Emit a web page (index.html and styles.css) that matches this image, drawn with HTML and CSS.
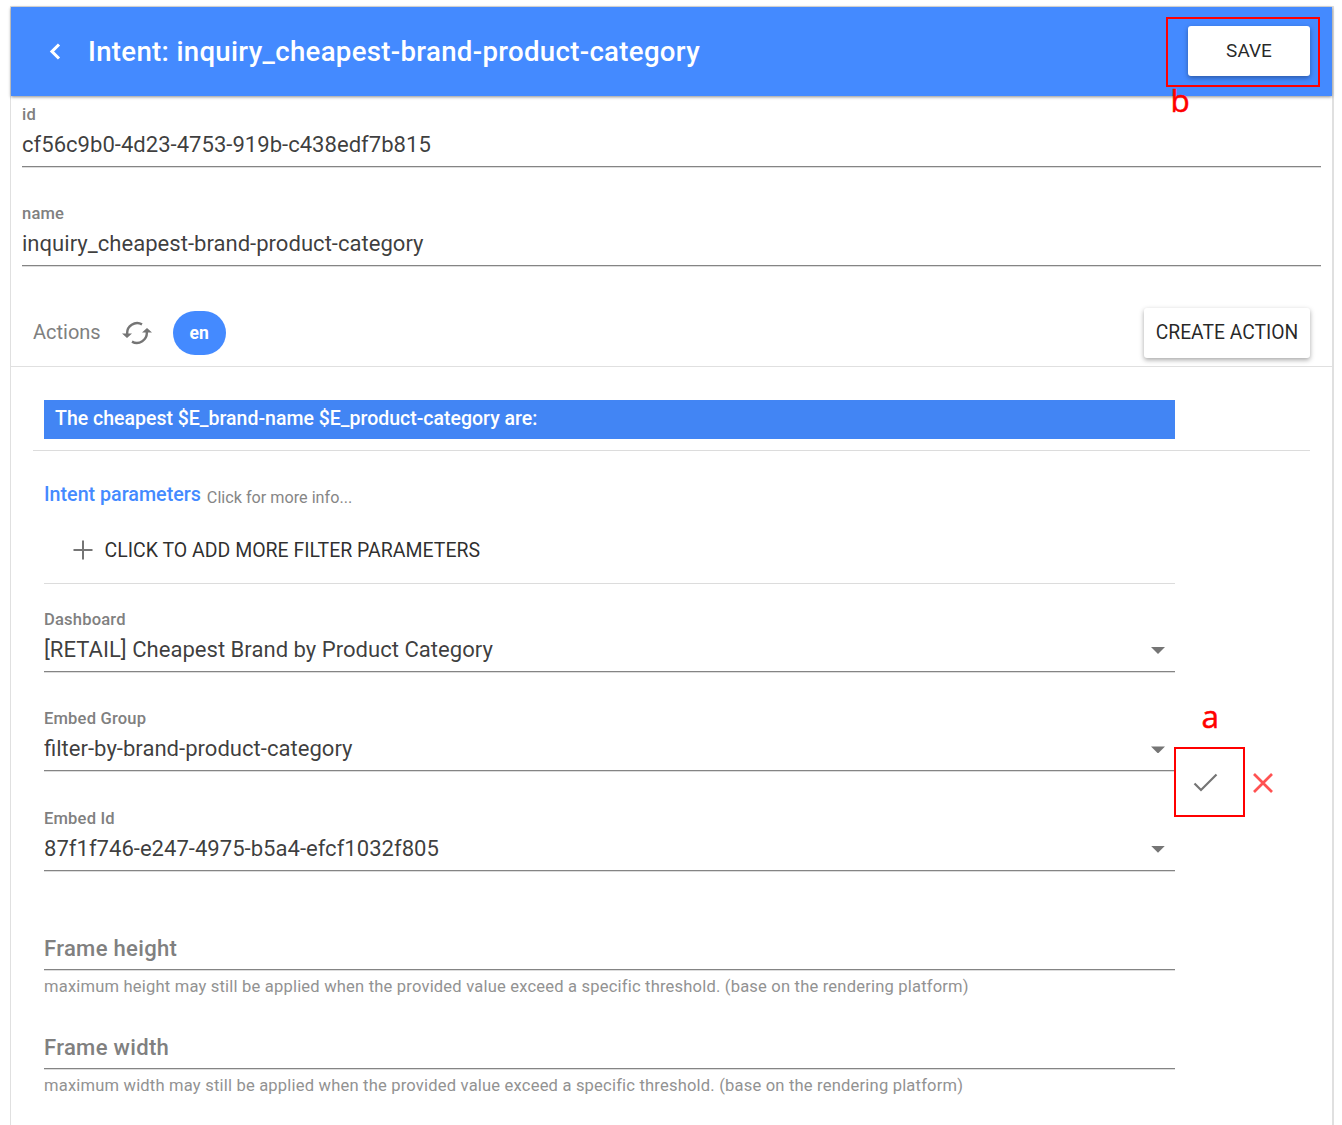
FILE: index.html
```html
<!DOCTYPE html>
<html lang="en">
<head>
<meta charset="utf-8">
<title>Intent</title>
<link rel="stylesheet" href="styles.css">
</head>
<body>
<main class="card">
  <header class="toolbar">
    <svg class="back" width="12" height="18" viewBox="0 0 12 18"><path d="M10 1.500 3 8.500l7 7" fill="none" stroke="#fff" stroke-width="3.1"/></svg>
    <h1 class="title">Intent: inquiry_cheapest-brand-product-category</h1>
    <button class="btn btn-save">SAVE</button>
  </header>

  <section class="basics">
    <div class="field"><label class="label">id</label><div class="value"><span>cf56c9b0-4d23-4753-919b-c438edf7b815</span></div></div>
    <div class="field"><label class="label">name</label><div class="value"><span>inquiry_cheapest-brand-product-category</span></div></div>
  </section>

  <section class="actions-bar">
    <span class="actions-title">Actions</span>
    <svg class="refresh" width="30" height="24" viewBox="0 0 30 24"><g fill="none" stroke="#757575" stroke-width="2.4"><path d="M5.2 13A10 10 0 0 1 20 3.400"/><path d="M24.800 11A10 10 0 0 1 10 20.600"/></g><path d="M0 12.500h10l-5 4.500zM20 11.500h10l-5-4.500z" fill="#757575"/></svg>
    <span class="lang">en</span>
    <button class="btn btn-create">CREATE ACTION</button>
  </section>

  <section class="detail">
    <div class="banner">The cheapest $E_brand-name $E_product-category are:</div>
    <div class="rule"></div>
    <div class="body">
      <div class="form">
        <div class="params"><span class="params-title">Intent parameters</span><span class="params-info">Click for more info...</span></div>
        <div class="add"><svg width="20" height="20" viewBox="0 0 20 20"><path d="M10 .5v19M.5 10h19" stroke="#757575" stroke-width="2"/></svg><span>CLICK TO ADD MORE FILTER PARAMETERS</span></div>
        <div class="field"><label class="label">Dashboard</label><div class="value"><span>[RETAIL] Cheapest Brand by Product Category</span><i class="caret"></i></div></div>
        <div class="field"><label class="label">Embed Group</label><div class="value"><span>filter-by-brand-product-category</span><i class="caret"></i></div></div>
        <div class="field"><label class="label">Embed Id</label><div class="value"><span>87f1f746-e247-4975-b5a4-efcf1032f805</span><i class="caret"></i></div></div>
        <div class="field frame-first"><div class="value placeholder">Frame height</div><p class="hint">maximum height may still be applied when the provided value exceed a specific threshold. (base on the rendering platform)</p></div>
        <div class="field"><div class="value placeholder">Frame width</div><p class="hint">maximum width may still be applied when the provided value exceed a specific threshold. (base on the rendering platform)</p></div>
      </div>
      <div class="row-tools">
        <svg width="25" height="20" viewBox="0 0 25 20"><path d="M1.500 10.500 8 17 23.500 1.500" fill="none" stroke="#757575" stroke-width="2.2"/></svg>
        <svg width="20" height="20" viewBox="0 0 20 20"><path d="M1 1l18 18M19 1 1 19" stroke="#ff5252" stroke-width="2.700"/></svg>
      </div>
    </div>
  </section>
</main>
<div class="mark mark-b"></div><span class="letter letter-b">b</span>
<div class="mark mark-a"></div><span class="letter letter-a">a</span>
</body>
</html>
```
FILE: styles.css
```css
* { box-sizing: border-box; }
body { margin: 0; background: #fff; font-family: Roboto, "Liberation Sans", sans-serif; color: rgba(0,0,0,.77); height: 1125px; overflow: hidden; }
.card { margin: 6px 8px 0 10px; height: 1130px; border: 1px solid #e0e0e0; border-right-width: 2px; }
.toolbar { height: 89px; background: #448aff; color: #fff; display: flex; align-items: center; padding: 0 22px 0 38px; box-shadow: 0 1px 3px rgba(0,0,0,.45); }
.title { margin: 0 auto 0 27px; font-size: 27.6px; font-weight: 500; line-height: 32px; letter-spacing: .32px; }
.btn { height: 50px; border: 0; border-radius: 3px; background: #fff; color: rgba(0,0,0,.85); font: 450 19.3px/50px Roboto, sans-serif; padding: 0; text-align: center; white-space: nowrap; box-shadow: 0 2px 5px rgba(0,0,0,.35); }
.btn-save { width: 122px; margin-bottom: 1px; font-size: 19px; }
.btn-create { width: 166px; margin-left: auto; }
.basics { padding: 8px 11px 0 11px; height: 199.4px; }
.field { height: 99.4px; }
.label { display: block; height: 20px; line-height: 22px; font-size: 16.56px; font-weight: 500; letter-spacing: .18px; color: #808080; }
.value { display: flex; justify-content: space-between; height: 43px; padding-top: 7px; line-height: 28px; font-size: 22.08px; border-bottom: 1px solid #848484; box-shadow: 0 1px 0 #ddd; }
.caret { width: 14px; height: 7px; margin: 11px 10px 0 0; background: #757575; clip-path: polygon(0 0, 100% 0, 50% 100%); }
.actions-bar { display: flex; align-items: center; height: 72px; padding: 4px 22px 0 22px; border-bottom: 1px solid #e0e0e0; }
.actions-title { font-size: 20px; line-height: 22px; padding-bottom: 2px; color: #808080; }
.refresh { margin: 0 21px; }
.lang { width: 53px; height: 44px; border-radius: 22px; background: #448aff; color: #fff; font-size: 17.5px; font-weight: 700; line-height: 44px; text-align: center; }
.detail { padding: 33px 22px 0; }
.banner { margin-left: 11px; width: 1131px; height: 39px; padding-left: 11px; background: #4285f4; color: #fff; font-size: 19.5px; font-weight: 500; line-height: 37px; }
.rule { margin-top: 11px; height: 1px; background: #dcdcdc; }
.body { display: flex; padding-left: 11px; }
.form { width: 1131px; }
.params { display: flex; gap: 6px; height: 58px; padding-top: 29px; line-height: 29px; }
.params-title { font-size: 19.7px; font-weight: 500; color: #448aff; }
.params-info { padding-top: 3px; font-size: 16.2px; color: #868686; }
.add { display: flex; align-items: center; gap: 11.5px; height: 75px; padding: 8px 0 0 29px; font-size: 19.5px; font-weight: 450; color: rgba(0,0,0,.83); border-bottom: 1px solid #dcdcdc; margin-bottom: 24.7px; }
.placeholder { padding-top: 1px; height: 36px; font-weight: 500; letter-spacing: .3px; color: #808080; }
.frame-first { margin-top: 26.6px; }
.hint { margin: 7px 0 0; line-height: 20px; font-size: 16.56px; letter-spacing: .19px; color: #929292; }
.row-tools { display: flex; gap: 35px; padding: 322px 0 0 18px; height: 345px; }
.mark { position: absolute; border: 2px solid #f00; }
.mark-b { left: 1166px; top: 17px; width: 154px; height: 70px; }
.mark-a { left: 1174px; top: 747px; width: 71px; height: 70px; }
.letter { position: absolute; color: #f00; font: 500 31.5px/40px "Open Sans", sans-serif; -webkit-text-stroke: .5px #f00; }
.letter-b { left: 1170.5px; top: 80px; }
.letter-a { left: 1201.5px; top: 696px; }
```
